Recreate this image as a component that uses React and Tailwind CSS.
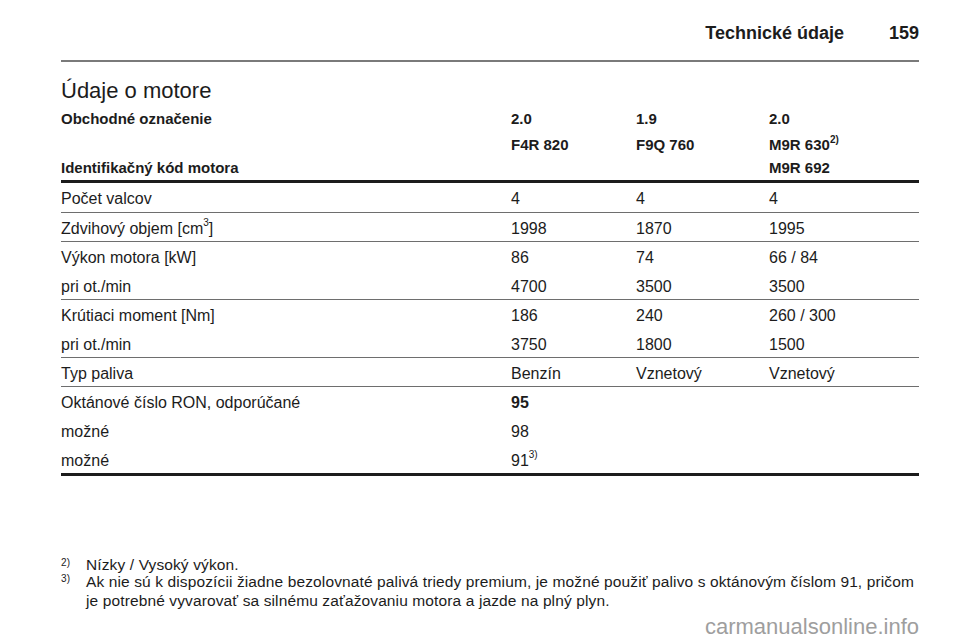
import React from 'react';

const font = { fontFamily: '"Liberation Sans", Arial, sans-serif' };

// column grid: label | col A | col B | col C
const cols = 'grid grid-cols-[450px_125px_133px_1fr]';

const Sup = ({ children }) => (
  <sup className="text-[10px] relative -top-[1px] align-super leading-none">{children}</sup>
);

const Row = ({ h = 'h-[28px]', label, a, b, c }) => (
  <div className={`${cols} ${h} items-center pt-[3px] text-[16px]`}>
    <div>{label}</div>
    <div>{a}</div>
    <div>{b}</div>
    <div>{c}</div>
  </div>
);

const groups = [
  [{ h: 'h-[29px]', label: 'Počet valcov', a: '4', b: '4', c: '4' }],
  [{ label: <>Zdvihový objem [cm<Sup>3</Sup>]</>, a: '1998', b: '1870', c: '1995' }],
  [
    { h: 'h-[29px]', label: 'Výkon motora [kW]', a: '86', b: '74', c: '66 / 84' },
    { label: 'pri ot./min', a: '4700', b: '3500', c: '3500' },
  ],
  [
    { h: 'h-[29px]', label: 'Krútiaci moment [Nm]', a: '186', b: '240', c: '260 / 300' },
    { label: 'pri ot./min', a: '3750', b: '1800', c: '1500' },
  ],
  [{ label: 'Typ paliva', a: 'Benzín', b: 'Vznetový', c: 'Vznetový' }],
];

const octane = [
  { h: 'h-[29px]', label: 'Oktánové číslo RON, odporúčané', a: <span className="font-bold">95</span> },
  { h: 'h-[29px]', label: 'možné', a: '98' },
  { label: 'možné', a: <>91<Sup>3)</Sup></> },
];

export default function App() {
  return (
    <div className="w-[960px] h-[642px] bg-white text-[#1c1c1c] overflow-hidden pl-[61px] pr-[41px]" style={font}>
      {/* page header */}
      <div className="flex justify-end items-center pt-[22px] h-[44px] text-[18px] font-bold leading-[22px]">
        <span>Technické údaje</span>
        <span className="ml-[45px]">159</span>
      </div>
      <div className="mt-[16px] h-[2px] bg-[#7a7a7a]" />

      <h1 className="mt-[16px] text-[22px] leading-[26px]">Údaje o motore</h1>

      {/* table head */}
      <div className="mt-[4px] text-[15px] font-bold">
        <div className={`${cols} h-[26px] items-center pb-[3px]`}>
          <div>Obchodné označenie</div>
          <div>2.0</div>
          <div>1.9</div>
          <div>2.0</div>
        </div>
        <div className={`${cols} h-[23px] items-center`}>
          <div />
          <div>F4R 820</div>
          <div>F9Q 760</div>
          <div>M9R 630<Sup>2)</Sup></div>
        </div>
        <div className={`${cols} h-[23px] items-center`}>
          <div>Identifikačný kód motora</div>
          <div />
          <div />
          <div>M9R 692</div>
        </div>
      </div>
      <div className="h-[3px] bg-[#1c1c1c]" />

      {groups.map((g, i) => (
        <div key={i} className="border-b border-[#6e6e6e]">
          {g.map((r, j) => (
            <Row key={j} {...r} />
          ))}
        </div>
      ))}
      <div>
        {octane.map((r, j) => (
          <Row key={j} {...r} />
        ))}
      </div>
      <div className="h-[3px] bg-[#1c1c1c]" />

      {/* footnotes */}
      <div className="mt-[81px] text-[15.5px] tracking-[0.12px]">
        <div className="flex leading-[16px]">
          <span className="w-[25px] shrink-0 text-[10px] leading-[12px]">2)</span>
          <span>Nízky / Vysoký výkon.</span>
        </div>
        <div className="flex leading-[19px] -mt-[1px]">
          <span className="w-[25px] shrink-0 text-[10px] leading-[14px]">3)</span>
          <span>
            Ak nie sú k dispozícii žiadne bezolovnaté palivá triedy premium, je možné použiť palivo s oktánovým číslom 91, pričom
            je potrebné vyvarovať sa silnému zaťažovaniu motora a jazde na plný plyn.
          </span>
        </div>
      </div>

      <div className="mt-[4px] text-right text-[22px] leading-[26px] text-[#9e9e9e]">carmanualsonline.info</div>
    </div>
  );
}
